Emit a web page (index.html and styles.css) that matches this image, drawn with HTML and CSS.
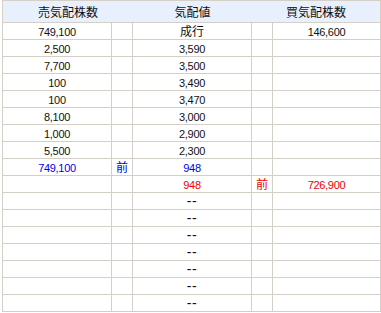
FILE: index.html
```html
<!DOCTYPE html>
<html lang="ja">
<head>
<meta charset="utf-8">
<link rel="stylesheet" href="styles.css">
</head>
<body>
<div class="board">
  <div class="head">
    <div class="hcell">売気配株数</div>
    <div class="hcell">気配値</div>
    <div class="hcell">買気配株数</div>
  </div>
  <div class="row"><div class="c num">749,100</div><div class="c"></div><div class="c">成行</div><div class="c"></div><div class="c num">146,600</div></div>
  <div class="row"><div class="c num">2,500</div><div class="c"></div><div class="c num">3,590</div><div class="c"></div><div class="c"></div></div>
  <div class="row"><div class="c num">7,700</div><div class="c"></div><div class="c num">3,500</div><div class="c"></div><div class="c"></div></div>
  <div class="row"><div class="c num">100</div><div class="c"></div><div class="c num">3,490</div><div class="c"></div><div class="c"></div></div>
  <div class="row"><div class="c num">100</div><div class="c"></div><div class="c num">3,470</div><div class="c"></div><div class="c"></div></div>
  <div class="row"><div class="c num">8,100</div><div class="c"></div><div class="c num">3,000</div><div class="c"></div><div class="c"></div></div>
  <div class="row"><div class="c num">1,000</div><div class="c"></div><div class="c num">2,900</div><div class="c"></div><div class="c"></div></div>
  <div class="row"><div class="c num">5,500</div><div class="c"></div><div class="c num">2,300</div><div class="c"></div><div class="c"></div></div>
  <div class="row blue"><div class="c num">749,100</div><div class="c">前</div><div class="c num">948</div><div class="c"></div><div class="c"></div></div>
  <div class="row red"><div class="c"></div><div class="c"></div><div class="c num">948</div><div class="c">前</div><div class="c num">726,900</div></div>
  <div class="row"><div class="c"></div><div class="c"></div><div class="c dash">--</div><div class="c"></div><div class="c"></div></div>
  <div class="row"><div class="c"></div><div class="c"></div><div class="c dash">--</div><div class="c"></div><div class="c"></div></div>
  <div class="row"><div class="c"></div><div class="c"></div><div class="c dash">--</div><div class="c"></div><div class="c"></div></div>
  <div class="row"><div class="c"></div><div class="c"></div><div class="c dash">--</div><div class="c"></div><div class="c"></div></div>
  <div class="row"><div class="c"></div><div class="c"></div><div class="c dash">--</div><div class="c"></div><div class="c"></div></div>
  <div class="row"><div class="c"></div><div class="c"></div><div class="c dash">--</div><div class="c"></div><div class="c"></div></div>
  <div class="row"><div class="c"></div><div class="c"></div><div class="c dash">--</div><div class="c"></div><div class="c"></div></div>
</div>
</body>
</html>
```
FILE: styles.css
```css
html, body {
  margin: 0;
  padding: 0;
  background: #ffffff;
}
body {
  padding-left: 2px;
  font-family: "Noto Sans CJK JP", sans-serif;
  font-size: 12px;
  color: #111111;
}
.board {
  width: 379px;
  border-left: 1px solid #d4d0c8;
  border-top: 1px solid #d4d0c8;
  border-right: 1px solid #d4d0c8;
  box-sizing: border-box;
}
.head {
  display: grid;
  grid-template-columns: 130px 119px 128px;
  height: 22px;
  background: #e8f0fe;
  border-bottom: 1px solid #d4d0c8;
  box-sizing: border-box;
}
.hcell {
  text-align: center;
  line-height: 21px;
  font-size: 12px;
}
.row {
  display: grid;
  grid-template-columns: 109px 21px 119px 21px 107px;
  height: 17px;
}
.c {
  border-bottom: 1px solid #d4d0c8;
  border-right: 1px solid #d4d0c8;
  text-align: center;
  line-height: 16px;
  height: 17px;
  box-sizing: border-box;
  font-size: 12px;
  overflow: hidden;
}
.c:last-child {
  border-right: none;
}
.num {
  font-family: "Liberation Sans", sans-serif;
  font-size: 11px;
  letter-spacing: -0.3px;
  padding-top: 1px;
}
.dash {
  font-family: "Liberation Sans", sans-serif;
  font-size: 14px;
  letter-spacing: 0.5px;
}
.blue .c {
  color: #0000ee;
}
.red .c {
  color: #ee0000;
}
```
